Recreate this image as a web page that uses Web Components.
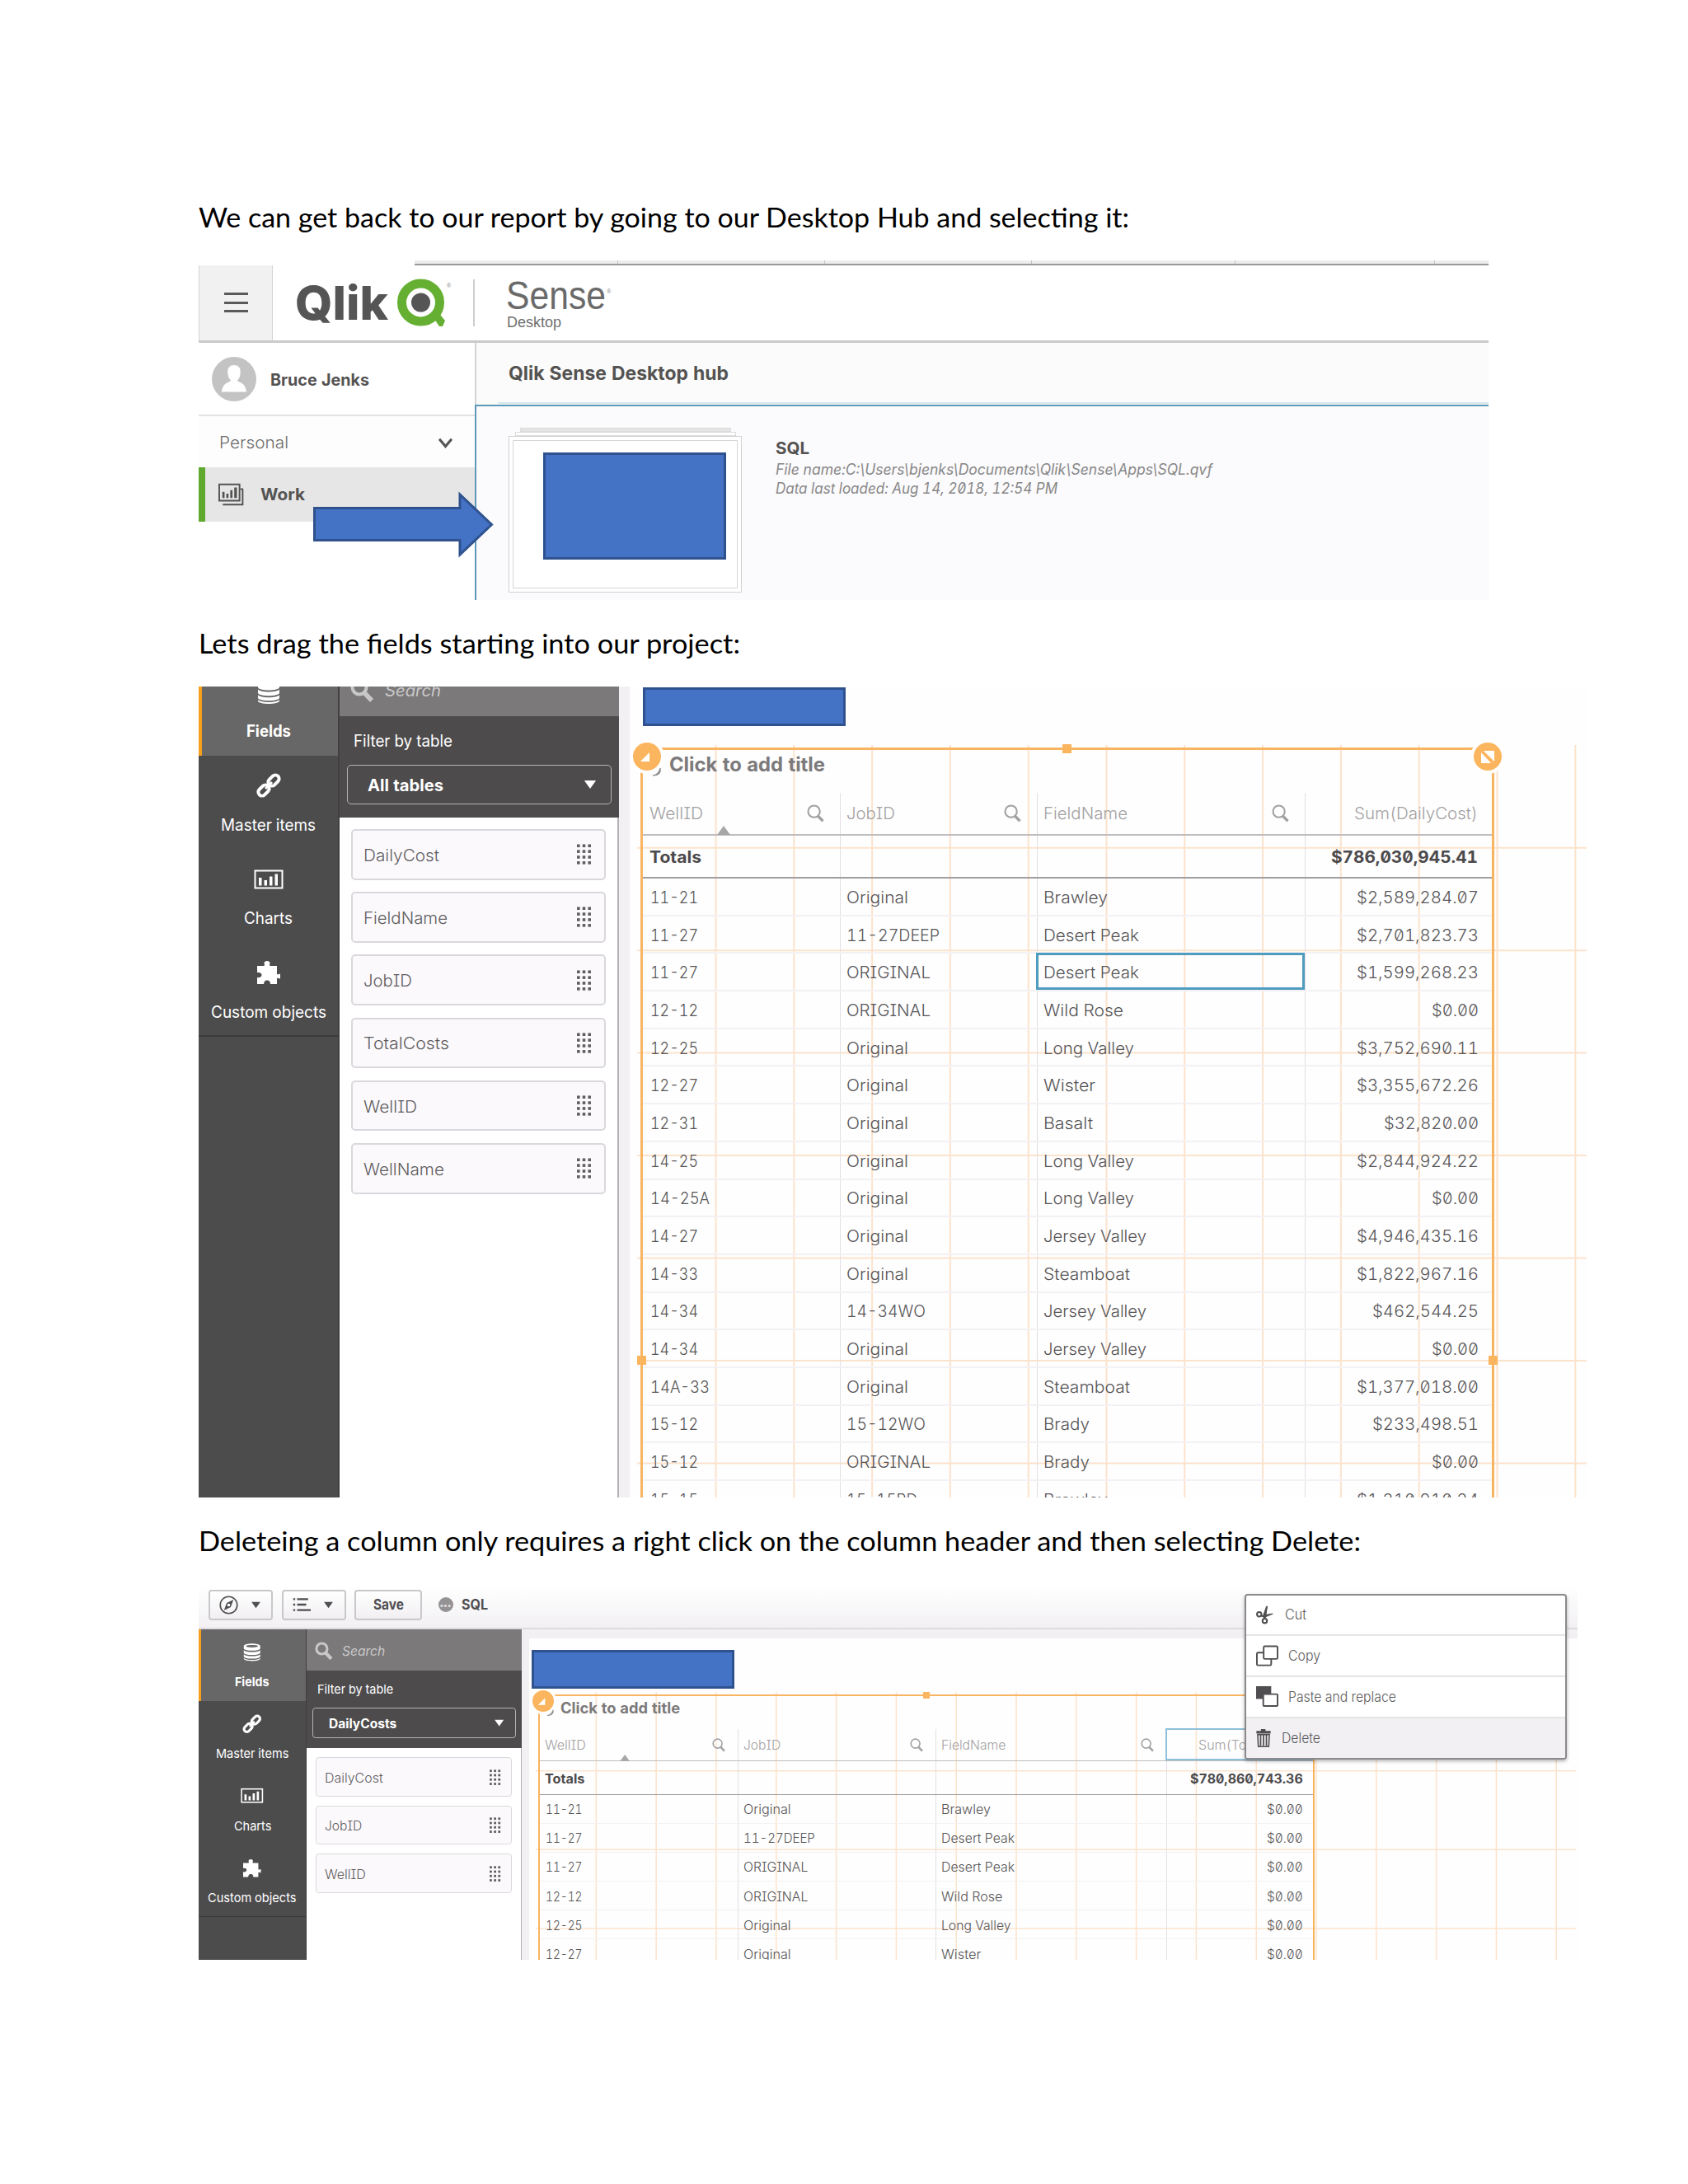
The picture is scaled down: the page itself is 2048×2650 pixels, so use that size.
<!DOCTYPE html>
<html lang="en">
<head>
<meta charset="utf-8">
<title>Qlik Sense guide</title>
<style>
  body {
    margin: 0;
    background: #fff;
  }
</style>
</head>
<body>
<guide-page>
  <guide-caption w="1129">We can get back to our report by going to our Desktop Hub and selecting it:</guide-caption>
  <hub-shot></hub-shot>
  <guide-caption w="657">Lets drag the fields starting into our project:</guide-caption>
  <fields-shot></fields-shot>
  <guide-caption w="1410">Deleteing a column only requires a right click on the column header and then selecting Delete:</guide-caption>
  <delete-shot></delete-shot>
</guide-page>

<script>
const FONT = `font-family: Inter, Roboto, sans-serif; font-feature-settings: "zero", "cv08", "tnum";`

// Widths of the table and list strings, in sheet units
const WIDTHS = {
	'WellID': 65, 'JobID': 59, 'FieldName': 102, 'DailyCost': 92, 'TotalCosts': 104, 'WellName': 98,
	'Sum(DailyCost)': 150, 'Sum(TotalCosts)': 162,
	'Original': 75, 'ORIGINAL': 102, '11-27DEEP': 113, '14-34WO': 96, '15-12WO': 96, '15-15RD': 86,
	'Brawley': 78, 'Desert Peak': 116, 'Wild Rose': 97, 'Long Valley': 110, 'Wister': 63,
	'Basalt': 60, 'Jersey Valley': 125, 'Steamboat': 105, 'Brady': 56,
	'14-25A': 72, '14A-33': 72,
}

function textWidth(text) {
	if (WIDTHS[text]) return WIDTHS[text]
	if (/^\d\d-\d\d$/.test(text)) return 58
	if (text.length === 13) return 148
	if (text.length === 11) return 129
	if (text.length === 10) return 115
	return 57
}

function fit(text, width) {
	return `<fit-text w="${width || textWidth(text)}">${text}</fit-text>`
}

const ICONS = {
	db: `<path d="M1 4.5C1-1 27-1 27 4.500v3.300c0 5-26 5-26 0z"/><path d="M1 10.600c3 4 23 4 26 0v4c0 5-26 5-26 0zM1 17.300c3 4 23 4 26 0v3.200c0 5-26 5-26 0zM1 23c3 4 23 4 26 0v1.200c0 5-26 5-26 0z"/><ellipse cx="14" cy="4.500" rx="9.500" ry="2" fill="#666"/>`,
	link: `<g fill="none" stroke="currentColor" stroke-width="4"><rect x="12.500" y="3.500" width="15" height="9" rx="4.500" transform="rotate(-45 20 8)"/><rect x="0.500" y="15.500" width="15" height="9" rx="4.500" transform="rotate(-45 8 20)"/></g><path d="M10 18l8-8" stroke="currentColor" stroke-width="3"/>`,
	chart: `<rect x="-2.500" y="3.500" width="33" height="21" fill="none" stroke="currentColor" stroke-width="2"/><path d="M2 12h3.500v9.500H2zM8.500 15H12v6.500H8.500zM15 10.500h3.500v11H15zM21.500 7.500H25v14h-3.500z"/>`,
	puzzle: `<path d="M0 6h8.500C9.500 4 8.500 3.500 8.500 2.500 8.500 1 10 0 12 0s3.500 1 3.500 2.500c0 1-1 1.500 0 3.500H24v10c2 1 2.500-.5 4-.5v6c-1.500 0-2-1.500-4-.5V28h-8c0-2-.5-4.500-4-4.500S8.500 26 8 28H0v-8c3 .5 5.500-.5 5.500-3S3 13.500 0 14z"/>`,
	search: `<circle cx="11" cy="11" r="8.500" fill="none" stroke="currentColor" stroke-width="4"/><path d="M17 17.500l9 9.500" stroke="currentColor" stroke-width="5.500"/>`,
	find: `<circle cx="11.500" cy="11.500" r="9.500" fill="none" stroke="currentColor" stroke-width="2.800"/><path d="M18 19l8 8" stroke="currentColor" stroke-width="4.500"/>`,
	dots: [0, 1, 2, 3].map((r) => [0, 1, 2].map((c) => `<rect x="${4.500 + c * 7.500}" y="${0.500 + r * 7.700}" width="4" height="4"/>`).join('')).join(''),
	caret: `<path d="M4 7h20L14 21z"/>`,
	compass: `<circle cx="14" cy="14" r="12.500" fill="none" stroke="currentColor" stroke-width="2"/><path d="M21 6L17 17 7 22 11 11z"/><circle cx="14" cy="14" r="2.200" fill="#fff"/>`,
	list: `<path d="M1 4h3v3H1zM1 12.500h3v3H1zM1 21h3v3H1zM7 4h17v3H7zM7 12.500h14v3H7zM7 21h21v3H7z"/>`,
	cut: `<g fill="none" stroke="currentColor" stroke-width="2.800"><circle cx="5" cy="13" r="3.600"/><circle cx="14" cy="23.500" r="3.600"/></g><path d="M8 15.500L27 12 13 18zM13 20L18 0l-3 19zM12 14l3-1 2-13z" stroke="currentColor" stroke-width="1.500"/>`,
	copy: `<g fill="#fff" stroke="currentColor" stroke-width="2"><rect x="1" y="9.500" width="18" height="16" rx="1.500"/><rect x="9.500" y="1.500" width="17.500" height="16" rx="1.500"/></g>`,
	paste: `<path d="M0 1h19v16H0z"/><rect x="9" y="11" width="18" height="15" rx="1" fill="#fff" stroke="currentColor" stroke-width="2"/>`,
	trash: `<path d="M3 3h7V0h7v3h8v4H3z"/><path d="M5 8.500h18L22 27H6z" fill="none" stroke="currentColor" stroke-width="2"/><path d="M9.500 8v18M14 8v18M18.500 8v18" stroke="currentColor" stroke-width="2.200"/>`,
	work: `<g fill="none" stroke="currentColor" stroke-width="1.800"><path d="M0 2.500h23v18.500H0z"/><path d="M26.500 8v17.500H4M24 8h3"/></g><path d="M3.500 11H6v7H3.500zM8 13h2.500v5H8zM12.500 9H15v9h-2.500zM17 6h3v12h-3z"/>`,
	chevron: `<path d="M3 7l11 13L25 7" fill="none" stroke="currentColor" stroke-width="4.500"/>`,
}

class GuidePage extends HTMLElement {
	constructor() {
		super()
		this.attachShadow({ mode: 'open' })
		this.shadowRoot.innerHTML = `
      <style>
        :host {
          display: flex;
          flex-direction: column;
          align-items: flex-start;
          gap: 32.5px;
          box-sizing: border-box;
          width: 2048px;
          height: 2650px;
          padding: 243px 0 0 241px;
          overflow: hidden;
        }
      </style>
      <slot></slot>
    `
	}
}

class GuideCaption extends HTMLElement {
	constructor() {
		super()
		this.attachShadow({ mode: 'open' })
		this.shadowRoot.innerHTML = `
      <style>
        :host {
          display: block;
          height: 40px;
          font: 32.5px/40px Lato, "Liberation Sans", sans-serif;
          color: #000;
        }
      </style>
      <fit-text w="${this.getAttribute('w')}"><slot></slot></fit-text>
    `
	}
}

class QsIcon extends HTMLElement {
	constructor() {
		super()
		this.attachShadow({ mode: 'open' })
		const size = this.getAttribute('size') || 28
		this.shadowRoot.innerHTML = `
      <style>
        :host {
          display: block;
          flex: none;
          width: ${size}px;
          height: ${size}px;
        }
        svg {
          display: block;
          overflow: visible;
        }
      </style>
      <svg width="${size}" height="${size}" viewBox="0 0 28 28" fill="currentColor">${ICONS[this.getAttribute('name')]}</svg>
    `
	}
}

// Solid block laid over a part of a screen
class CoverBox extends HTMLElement {
	constructor() {
		super()
		this.attachShadow({ mode: 'open' })
		this.shadowRoot.innerHTML = `
      <style>
        :host {
          display: block;
          box-sizing: border-box;
          background: #4472c4;
          border: 3px solid #2f528f;
        }
      </style>
    `
	}
}

class HubShot extends HTMLElement {
	constructor() {
		super()
		this.attachShadow({ mode: 'open' })
		this.shadowRoot.innerHTML = `
      <style>
        :host {
          display: flex;
          flex-direction: column;
          position: relative;
          width: 1565px;
          height: 412px;
          color: #545352;
          --drop: 0px;
          ${FONT}
        }

        .tabs {
          flex: none;
          display: flex;
          box-sizing: border-box;
          height: 6px;
          margin-left: 262px;
          background: #ededed;
          border-bottom: 2px solid #999;
        }

        .tabs i {
          width: 246px;
          border-right: 1px solid #c4c4c4;
        }

        header {
          flex: none;
          display: flex;
          box-sizing: border-box;
          height: 94px;
          border-bottom: 3px solid #cacaca;
        }

        .menu {
          display: flex;
          flex-direction: column;
          justify-content: center;
          align-items: center;
          gap: 7.500px;
          box-sizing: border-box;
          width: 90px;
          background: #f1f1f1;
          border: 1px solid #d4d4d4;
          border-width: 0 1px;
        }

        .menu i {
          width: 29px;
          height: 3px;
          background: #5a5a5a;
        }

        .logo {
          display: flex;
          padding-left: 27px;
        }

        .logo fit-text {
          font: 800 57px/91px Inter, sans-serif;
          color: #555;
        }

        .logo svg {
          margin: 16px 0 0 11px;
        }

        .bar {
          width: 2px;
          height: 57px;
          margin: 17px 38px 0 27px;
          background: #cfcfcf;
        }

        .product {
          display: flex;
          flex-direction: column;
          padding-top: 15px;
          font: 48px/43px "Liberation Sans", sans-serif;
          color: #6a6a6a;
        }

        .product fit-text + fit-text {
          font-size: 17.500px;
          line-height: 20px;
          color: #707070;
          margin: 1px 0 0 1px;
        }

        .reg {
          font: 7px/10px "Liberation Sans", sans-serif;
          color: #888;
          margin: 27px 0 0 1px;
        }

        .body {
          flex: 1;
          display: flex;
        }

        aside {
          box-sizing: border-box;
          width: 335px;
          background: #fff;
        }

        .user {
          display: flex;
          align-items: center;
          gap: 17px;
          box-sizing: border-box;
          height: 89px;
          padding: 1px 0 0 16px;
          border-bottom: 2px solid #e2e2e2;
          font-weight: 700;
          font-size: 20px;
          --drop: 1px;
        }

        .group {
          display: flex;
          align-items: center;
          justify-content: space-between;
          height: 62px;
          padding: 0 26px 0 25px;
          background: #fdfdfd;
          font-size: 20px;
          font-weight: 350;
          color: #6c6c6c;
          --drop: 1px;
        }

        .group qs-icon {
          color: #555;
          margin-top: 3px;
        }

        .item {
          display: flex;
          align-items: center;
          gap: 20px;
          box-sizing: border-box;
          height: 66px;
          padding-left: 17px;
          border-left: 8px solid #5fa92f;
          background: #e6e6e6;
          font-weight: 700;
          font-size: 20px;
        }

        main {
          flex: 1;
          display: flex;
          flex-direction: column;
        }

        h1 {
          flex: none;
          box-sizing: border-box;
          height: 75px;
          margin: 0;
          padding: 0 0 0 39px;
          border-left: 2px solid #d4d4d4;
          background: linear-gradient(#d3e8ec, #d3e8ec) 26px 72px / 100% 2px no-repeat #fbfbfb;
          font-size: 23px;
          line-height: 74px;
          font-weight: 700;
        }

        .apps {
          flex: 1;
          display: flex;
          box-sizing: border-box;
          padding: 26px 0 0 39px;
          border: 2px solid #5b9ab8;
          border-width: 2px 0 0 2px;
          background: #fbfafc;
        }

        .stack {
          display: flex;
          flex-direction: column;
          align-items: center;
          width: 283px;
        }

        .stack i {
          box-sizing: border-box;
          width: 256px;
          height: 5px;
          background: #e4e4e4;
          border: 1px solid #dcdcdc;
        }

        .stack i + i {
          width: 268px;
          background: #fff;
        }

        .card {
          box-sizing: border-box;
          width: 283px;
          height: 190px;
          padding: 4px;
          border: 1.500px solid #d2d2d2;
          background: #fff;
        }

        .card div {
          display: flex;
          box-sizing: border-box;
          height: 100%;
          padding: 14px 0 0 36px;
          border: 1.500px solid #d6d6d6;
        }

        .card cover-box {
          width: 222px;
          height: 130px;
        }

        .info {
          display: flex;
          flex-direction: column;
          margin-left: 41px;
          padding-top: 10px;
          font-size: 18px;
          line-height: 23.500px;
          font-style: italic;
          color: #888;
          --drop: 1px;
        }

        .info :first-child {
          font-size: 20px;
          line-height: 28px;
          font-style: normal;
          font-weight: 700;
          color: #545352;
        }

        .arrow {
          position: absolute;
          left: 137px;
          top: 277px;
        }
      </style>

      <div class="tabs"><i></i><i style="width: 250px"></i><i style="width: 250px"></i><i></i><i style="width: 241px"></i></div>
      <header>
        <div class="menu"><i></i><i></i><i></i></div>
        <div class="logo">
          <fit-text w="113">Qlik</fit-text>
          <svg width="61" height="60" viewBox="0 0 61 60">
            <path d="M40 42l8-3 10 12-3 7h-4z" fill="#65b032"/>
            <circle cx="28.500" cy="29" r="23" fill="#fff" stroke="#65b032" stroke-width="11"/>
            <circle cx="28.500" cy="29" r="11.500" fill="#555"/>
          </svg>
          <span class="reg" style="margin: 20px 0 0 -1px">®</span>
        </div>
        <div class="bar"></div>
        <div class="product">
          <fit-text w="121">Sense</fit-text>
          <fit-text w="66">Desktop</fit-text>
        </div>
        <span class="reg">®</span>
      </header>
      <div class="body">
        <aside>
          <div class="user">
            <svg width="54" height="54" viewBox="0 0 54 54">
              <circle cx="27" cy="27" r="27" fill="#c3c3c3"/>
              <path d="M27 10c6 0 8.500 4 7.500 11-.5 4-2 6-3.500 7.500 1 3 10 2 11 14H12c1-12 10-11 11-14-1.500-1.500-3-3.500-3.500-7.500-1-7 1.500-11 7.500-11z" fill="#fff"/>
            </svg>
            <fit-text w="120">Bruce Jenks</fit-text>
          </div>
          <div class="group"><fit-text w="84">Personal</fit-text><qs-icon name="chevron" size="19"></qs-icon></div>
          <div class="item"><qs-icon name="work" size="30"></qs-icon><fit-text w="54">Work</fit-text></div>
        </aside>
        <main>
          <h1><fit-text w="267">Qlik Sense Desktop hub</fit-text></h1>
          <div class="apps">
            <div class="stack"><i></i><i></i><div class="card"><div><cover-box></cover-box></div></div></div>
            <div class="info">
              <fit-text w="41">SQL</fit-text>
              <fit-text w="530">File name:C:\\Users\\bjenks\\Documents\\Qlik\\Sense\\Apps\\SQL.qvf</fit-text>
              <fit-text w="342">Data last loaded: Aug 14, 2018, 12:54 PM</fit-text>
            </div>
          </div>
        </main>
      </div>
      <svg class="arrow" width="222" height="88" viewBox="0 0 222 88">
        <path d="M3.500 23.500H180V7l38.500 36.500L180 80V62.500H3.500z" fill="#4472c4" stroke="#2f528f" stroke-width="3"/>
      </svg>
    `
	}
}

class AssetNav extends HTMLElement {
	constructor() {
		super()
		this.attachShadow({ mode: 'open' })
		this.shadowRoot.innerHTML = `
      <style>
        :host {
          display: block;
          flex: none;
          box-sizing: border-box;
          width: 171px;
          background: #4d4c4d;
          border-right: 2px solid #414041;
          color: #fff;
          font-size: 19.500px;
        }

        .tab {
          display: flex;
          flex-direction: column;
          align-items: center;
          gap: 20.500px;
          box-sizing: border-box;
          height: 113.600px;
          padding-top: 22px;
          line-height: 24px;
        }

        .active {
          background: #686767;
          border-left: 4px solid #f7a01d;
          padding-right: 4px;
          font-weight: 700;
        }

        .tab:last-child {
          border-bottom: 2px solid #3b3a3b;
        }
      </style>
      <div class="tab active"><qs-icon name="db"></qs-icon>${fit('Fields', 54)}</div>
      <div class="tab"><qs-icon name="link"></qs-icon>${fit('Master items', 115)}</div>
      <div class="tab"><qs-icon name="chart"></qs-icon>${fit('Charts', 59)}</div>
      <div class="tab"><qs-icon name="puzzle"></qs-icon>${fit('Custom objects', 140)}</div>
    `
	}
}

class FieldList extends HTMLElement {
	constructor() {
		super()
		this.attachShadow({ mode: 'open' })
		const items = this.getAttribute('items').split(',')
		this.shadowRoot.innerHTML = `
      <style>
        :host {
          display: flex;
          flex-direction: column;
          flex: none;
          width: 339px;
          font-size: 20px;
        }

        .search {
          display: flex;
          align-items: center;
          gap: 14px;
          box-sizing: border-box;
          height: 65px;
          padding: 1px 0 0 13px;
          background: #7b797a;
          color: #c9c8c9;
          font-style: italic;
        }

        .filter {
          display: flex;
          flex-direction: column;
          gap: 17.500px;
          box-sizing: border-box;
          height: 123px;
          padding: 17.500px 9px 0;
          background: #4d4b4c;
          color: #fff;
        }

        .filter > fit-text {
          line-height: 24px;
          font-size: 19.500px;
          margin-left: 8px;
        }

        .select {
          display: flex;
          align-items: center;
          justify-content: space-between;
          box-sizing: border-box;
          height: 48px;
          padding: 0 15px 0 24px;
          border: 1.500px solid #b5b4b5;
          border-radius: 5px;
          font-weight: 700;
        }

        .items {
          flex: 1;
          display: flex;
          flex-direction: column;
          gap: 14.600px;
          padding: 14.500px 14px 0;
          background: #fff;
          border-right: 2px solid #b3b1b4;
        }

        .item {
          display: flex;
          align-items: center;
          justify-content: space-between;
          box-sizing: border-box;
          height: 61.600px;
          padding: 0 12.500px 0 13px;
          background: #fbf9fc;
          border: 2px solid #dad8dc;
          border-radius: 5px;
          color: #5f5d5f;
          font-weight: 350;
        }
      </style>
      <div class="search"><qs-icon name="search"></qs-icon>${fit('Search', 68)}</div>
      <div class="filter">
        ${fit('Filter by table', 120)}
        <div class="select">${fit(this.getAttribute('table'), this.getAttribute('table-width'))}<qs-icon name="caret" size="20"></qs-icon></div>
      </div>
      <div class="items">
        ${items.map((item) => `<div class="item">${fit(item)}<qs-icon name="dots" size="25"></qs-icon></div>`).join('')}
      </div>
    `
	}
}

class TableSheet extends HTMLElement {
	constructor() {
		super()
		this.attachShadow({ mode: 'open' })
		const columns = this.getAttribute('columns')
		const heads = this.getAttribute('heads').split(',')
		const rows = this.textContent.trim().split('\n').map((line) => line.trim().split(' | '))
		const selected = this.getAttribute('selected')
		const width = Number(this.getAttribute('grid-width'))
		const shift = Number(this.getAttribute('shift'))

		const lines = []
		for (let x = 95.5; x < width; x += 94.8) lines.push(`M${x} 0V1000`)
		for (let y = 124.7; y < 1000; y += 124.45) lines.push(`M0 ${y}H${width}`)

		this.shadowRoot.innerHTML = `
      <style>
        :host {
          display: flex;
          flex: 1;
          position: relative;
          box-sizing: border-box;
          border: solid #f2f0f3;
          border-width: 15px 0 0 13px;
          background: #fefefe;
          font-size: 20px;
          font-weight: 350;
          color: #565456;
        }

        .grid {
          position: absolute;
          left: ${9 + shift}px;
          top: 85px;
        }

        .frame {
          position: relative;
          box-sizing: border-box;
          width: ${this.getAttribute('frame')}px;
          margin: 88.500px 0 0 ${12.5 + shift}px;
          border: 3px solid #f9b461;
          border-bottom: 0;
        }

        .title {
          height: 51.500px;
          padding-left: 32.500px;
          font-size: 24px;
          line-height: 34px;
          font-weight: 700;
          color: #7c7a7b;
        }

        .row {
          display: grid;
          grid-template-columns: ${columns};
          box-sizing: border-box;
          height: 45.700px;
          border-bottom: 2px solid #f3f1f3;
        }

        .row > div {
          display: flex;
          align-items: center;
          box-sizing: border-box;
          padding-left: 9px;
        }

        .row > div + div {
          border-left: 1.500px solid #e2dfe2;
          padding-left: 7.500px;
        }

        .row > div:last-child {
          justify-content: flex-end;
          padding-right: 15.500px;
        }

        .head {
          height: 52px;
          border-bottom: 2px solid #bfbdbf;
          color: #a3a1a3;
        }

        .head > div {
          justify-content: space-between;
          padding-bottom: 2px;
          padding-right: 19px;
        }

        .head > div:first-child,
        .totals > div:first-child {
          padding-left: 8.500px;
        }

        .head > div:last-child,
        .totals > div:last-child {
          padding-right: 16.500px;
        }

        .head qs-icon {
          margin-top: 2px;
        }

        .totals {
          height: 52.500px;
          border-bottom: 2px solid #a09ea0;
          font-weight: 700;
          color: #4c4a4c;
        }

        .row > .picked {
          border: 3px solid #4f9cc0;
          margin: -1px 0 0 -1px;
          padding-left: 6.500px;
        }

        .head > .picked {
          border-color: #8fc0da;
          padding-top: 2px;
        }

        .sort {
          position: absolute;
          top: 92px;
        }

        .knob {
          position: absolute;
          top: -9.500px;
          width: 34px;
          height: 34px;
          border-radius: 50%;
          background: #fbb55f;
          box-shadow: 0 0 0 4px #fff;
        }

        .arc {
          position: absolute;
          left: 8px;
          top: 16px;
        }

        .handle {
          position: absolute;
          width: 11px;
          height: 11px;
          background: #fbb55f;
        }
      </style>
      <svg class="grid" width="${width}" height="1000"><path d="${lines.join('')}" fill="none" stroke="#fbc08a" stroke-opacity=".43" stroke-width="2"/></svg>
      <div class="frame">
        <div class="title">${fit('Click to add title', 189)}</div>
        <div class="row head">
          ${heads.map((head, i) => `<div class="${selected === 'head' && i === 3 ? 'picked' : ''}">${fit(head)}${i < 3 ? '<qs-icon name="find" size="21"></qs-icon>' : ''}</div>`).join('')}
        </div>
        <div class="row totals"><div>${fit('Totals', 63)}</div><div></div><div></div><div>${fit(this.getAttribute('total'), 178)}</div></div>
        ${rows.map((row, r) => `<div class="row">${row.map((cell, c) => `<div class="${selected === String(r) && c === 2 ? 'picked' : ''}">${fit(cell)}</div>`).join('')}</div>`).join('')}
        <svg class="sort" style="left: ${this.getAttribute('sort')}px" width="16" height="11"><path d="M0 11L8 0l8 11z" fill="#a8a6a8"/></svg>
        <svg class="arc" width="20" height="20"><path d="M4 15q7-1 9-9 2 9-9 9z" fill="#8a888a" stroke="#8a888a"/></svg>
        <svg class="knob" style="left: -12px" viewBox="0 0 34 34"><path d="M20 12v11H9z" fill="#fff"/></svg>
        <svg class="knob" style="right: -12px" viewBox="0 0 34 34"><path d="M9 12l12 13H9zM12 10h13v13z" fill="#fff"/></svg>
        <i class="handle" style="left: calc(50% - 5.500px); top: -7px"></i>
        <i class="handle" style="left: -7px; top: 735px"></i>
        <i class="handle" style="right: -7px; top: 735px"></i>
      </div>
    `
	}
}

class FieldsShot extends HTMLElement {
	constructor() {
		super()
		this.attachShadow({ mode: 'open' })
		this.shadowRoot.innerHTML = `
      <style>
        :host {
          display: block;
          position: relative;
          width: 1684px;
          height: 984px;
          overflow: hidden;
          ${FONT}
        }

        .editor {
          display: flex;
          height: 1013px;
          margin-top: -29px;
        }

        cover-box {
          position: absolute;
          left: 538.500px;
          top: 1px;
          width: 246px;
          height: 47px;
        }
      </style>
      <div class="editor">
        <asset-nav></asset-nav>
        <field-list table="All tables" table-width="92" items="DailyCost,FieldName,JobID,TotalCosts,WellID,WellName"></field-list>
        <table-sheet columns="239px 239px 325px 1fr" frame="1036" grid-width="1152" shift="0" sort="90" selected="2" heads="WellID,JobID,FieldName,Sum(DailyCost)" total="$786,030,945.41">
          11-21 | Original | Brawley | $2,589,284.07
          11-27 | 11-27DEEP | Desert Peak | $2,701,823.73
          11-27 | ORIGINAL | Desert Peak | $1,599,268.23
          12-12 | ORIGINAL | Wild Rose | $0.00
          12-25 | Original | Long Valley | $3,752,690.11
          12-27 | Original | Wister | $3,355,672.26
          12-31 | Original | Basalt | $32,820.00
          14-25 | Original | Long Valley | $2,844,924.22
          14-25A | Original | Long Valley | $0.00
          14-27 | Original | Jersey Valley | $4,946,435.16
          14-33 | Original | Steamboat | $1,822,967.16
          14-34 | 14-34WO | Jersey Valley | $462,544.25
          14-34 | Original | Jersey Valley | $0.00
          14A-33 | Original | Steamboat | $1,377,018.00
          15-12 | 15-12WO | Brady | $233,498.51
          15-12 | ORIGINAL | Brady | $0.00
          15-15 | 15-15RD | Brawley | $1,310,910.34
        </table-sheet>
      </div>
      <cover-box></cover-box>
    `
	}
}

class ContextMenu extends HTMLElement {
	constructor() {
		super()
		this.attachShadow({ mode: 'open' })
		this.shadowRoot.innerHTML = `
      <style>
        :host {
          display: flex;
          flex-direction: column;
          box-sizing: border-box;
          width: 391px;
          height: 201px;
          border: 2px solid #8b898b;
          border-radius: 4px;
          background: #fff;
          box-shadow: 0 2px 4px rgba(0, 0, 0, 0.3);
          font-size: 17px;
          font-weight: 350;
          color: #5c5a5c;
          overflow: hidden;
          --drop: 0px;
        }

        div {
          flex: 1;
          display: flex;
          align-items: center;
          gap: 12px;
          padding-left: 12px;
        }

        div + div {
          border-top: 2px solid #e6e4e6;
        }

        div:last-child {
          background: #f2f0f3;
        }

        qs-icon {
          color: #504e50;
        }
      </style>
      <div style="gap: 14px"><qs-icon name="cut" size="21"></qs-icon>${fit('Cut', 26)}</div>
      <div><qs-icon name="copy" size="27"></qs-icon>${fit('Copy', 39)}</div>
      <div><qs-icon name="paste" size="27"></qs-icon>${fit('Paste and replace', 131)}</div>
      <div style="gap: 11px; padding-left: 10px"><qs-icon name="trash" size="22"></qs-icon>${fit('Delete', 47)}</div>
    `
	}
}

class DeleteShot extends HTMLElement {
	constructor() {
		super()
		this.attachShadow({ mode: 'open' })
		this.shadowRoot.innerHTML = `
      <style>
        :host {
          display: block;
          position: relative;
          width: 1673px;
          height: 461px;
          margin-top: -4.500px;
          ${FONT}
        }

        .toolbar {
          display: flex;
          align-items: center;
          gap: 10.500px;
          box-sizing: border-box;
          height: 60px;
          padding: 2px 0 0 12px;
          background: linear-gradient(#fff 15%, #f2f0f3);
          border-bottom: 2px solid #dddbde;
          color: #504e50;
          font-size: 17px;
          font-weight: 700;
          --drop: 0px;
        }

        .btn {
          display: flex;
          align-items: center;
          justify-content: center;
          gap: 14px;
          box-sizing: border-box;
          width: 78px;
          height: 37px;
          border: 2px solid #c9c7ca;
          border-radius: 4px;
          background: linear-gradient(#fff, #f1eff2);
        }

        .status {
          display: flex;
          align-items: center;
          justify-content: center;
          width: 18px;
          height: 18px;
          margin: 0 0 0 9px;
          border-radius: 50%;
          background: #949294;
          color: #ddd;
          font-size: 10px;
          line-height: 10px;
        }

        .view {
          height: 401px;
          overflow: hidden;
        }

        .editor {
          display: flex;
          width: 2178px;
          height: 523px;
          zoom: 0.768;
        }

        cover-box {
          position: absolute;
          left: 404px;
          top: 84.500px;
          width: 246px;
          height: 47px;
        }

        context-menu {
          position: absolute;
          left: 1269px;
          top: 16.500px;
        }
      </style>
      <div class="toolbar">
        <div class="btn"><qs-icon name="compass" size="23"></qs-icon><qs-icon name="caret" size="15"></qs-icon></div>
        <div class="btn"><qs-icon name="list" size="22"></qs-icon><qs-icon name="caret" size="15"></qs-icon></div>
        <div class="btn" style="width: 82px">${fit('Save', 37)}</div>
        <div class="status">•••</div>
        ${fit('SQL', 32)}
      </div>
      <div class="view">
        <div class="editor">
          <asset-nav></asset-nav>
          <field-list table="DailyCosts" table-width="107" items="DailyCost,JobID,WellID"></field-list>
          <table-sheet columns="313px 312px 365px 1fr" frame="1227" grid-width="1643" shift="2" sort="127" selected="head" heads="WellID,JobID,FieldName,Sum(TotalCosts)" total="$780,860,743.36">
            11-21 | Original | Brawley | $0.00
            11-27 | 11-27DEEP | Desert Peak | $0.00
            11-27 | ORIGINAL | Desert Peak | $0.00
            12-12 | ORIGINAL | Wild Rose | $0.00
            12-25 | Original | Long Valley | $0.00
            12-27 | Original | Wister | $0.00
          </table-sheet>
        </div>
      </div>
      <cover-box></cover-box>
      <context-menu></context-menu>
    `
	}
}

// Scales its line of text sideways to the width given in the w attribute,
// and lowers it by --drop
class FitText extends HTMLElement {
	constructor() {
		super()
		this.attachShadow({ mode: 'open' })
		this.shadowRoot.innerHTML = `
      <style>
        :host {
          display: inline-block;
          flex: none;
          white-space: nowrap;
          text-align: left;
        }

        span {
          display: inline-block;
          transform-origin: 0 50%;
        }
      </style>
      <span><slot></slot></span>
    `
	}

	connectedCallback() {
		this.style.width = this.getAttribute('w') + 'px'
		const span = this.shadowRoot.querySelector('span')
		const ratio = this.getBoundingClientRect().width / span.getBoundingClientRect().width
		span.style.transform = `translateY(var(--drop, 1px)) scaleX(${ratio})`
	}
}

customElements.define('guide-page', GuidePage)
customElements.define('guide-caption', GuideCaption)
customElements.define('hub-shot', HubShot)
customElements.define('fields-shot', FieldsShot)
customElements.define('delete-shot', DeleteShot)
customElements.define('asset-nav', AssetNav)
customElements.define('field-list', FieldList)
customElements.define('table-sheet', TableSheet)
customElements.define('context-menu', ContextMenu)
customElements.define('cover-box', CoverBox)
customElements.define('qs-icon', QsIcon)
// Last, so that every text it measures already has its final font
customElements.define('fit-text', FitText)
</script>
</body>
</html>
